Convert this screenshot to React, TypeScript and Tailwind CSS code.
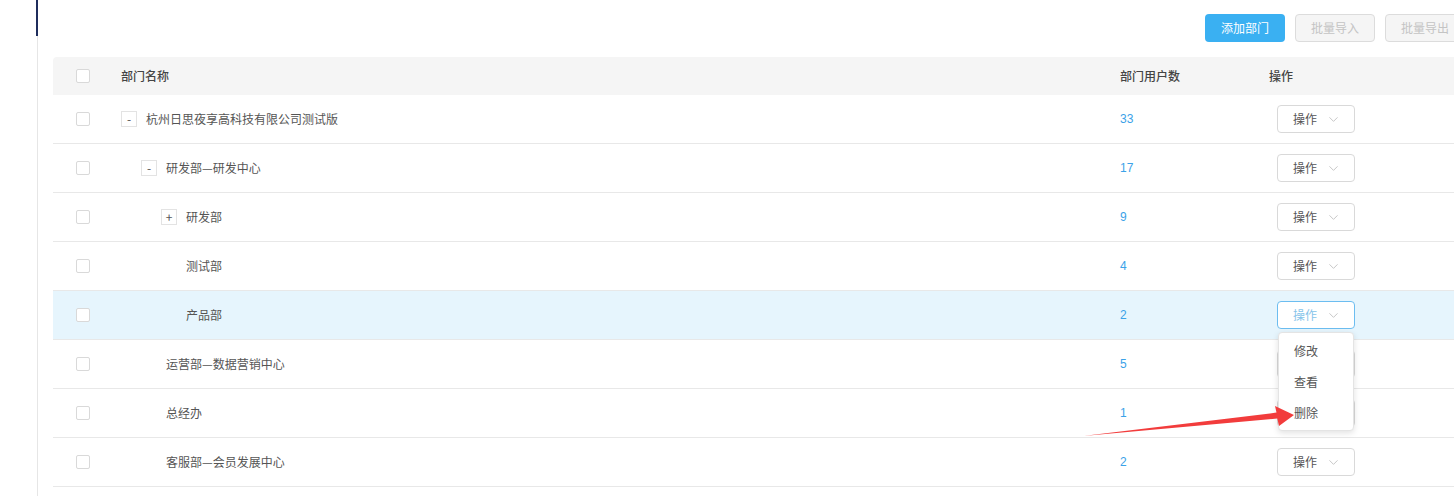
import { ChevronDown } from "lucide-react"

type Dept = {
    name: string
    level: number
    toggle?: "-" | "+"
    count: number
    active?: boolean
}

const depts: Dept[] = [
    { name: "杭州日思夜享高科技有限公司测试版", level: 0, toggle: "-", count: 33 },
    { name: "研发部—研发中心", level: 1, toggle: "-", count: 17 },
    { name: "研发部", level: 2, toggle: "+", count: 9 },
    { name: "测试部", level: 2, count: 4 },
    { name: "产品部", level: 2, count: 2, active: true },
    { name: "运营部—数据营销中心", level: 1, count: 5 },
    { name: "总经办", level: 1, count: 1 },
    { name: "客服部—会员发展中心", level: 1, count: 2 },
]

const indents = ["pl-0", "pl-[20px]", "pl-[40px]"]

const Checkbox = () => (
    <span className="block w-[14px] h-[14px] rounded-[2px] border border-[#d9d9d9] bg-white" />
)

const OpButton = ({ active }: { active?: boolean }) => (
    <button
        className={
            active
                ? "flex items-center w-[78px] h-[28px] pl-[15px] rounded-[4px] border border-[#6cbdf0] bg-white text-[12px] text-[#86c4ea]"
                : "flex items-center w-[78px] h-[28px] pl-[15px] rounded-[4px] border border-[#d9d9d9] bg-white text-[12px] text-[#555]"
        }
    >
        操作
        <ChevronDown className="ml-[9px] w-[15px] h-[15px] text-[#b4b4b4]" strokeWidth={1.2} />
    </button>
)

const App = () => {
    return (
        <div
            className="relative w-[1454px] h-[496px] overflow-hidden bg-white flex"
            style={{ fontFamily: '"Noto Sans CJK SC", "Liberation Sans", sans-serif' }}
        >
            <div className="w-[37px] flex-none" />
            <div className="relative flex-none w-[1428px] border-l border-[#e6e6e6] pl-[15px]">
                <div className="absolute left-[-2px] top-0 w-[2px] h-[36px] bg-[#1f2d5c]" />

                <div className="flex justify-end gap-[10px] pt-[14px] mb-[15px]">
                    <button className="w-[80px] h-[28px] rounded-[4px] bg-[#3ab0f2] text-white text-[12px]">添加部门</button>
                    <button className="w-[80px] h-[28px] rounded-[4px] border border-[#dcdcdc] bg-[#f5f5f5] text-[#c4c4c4] text-[12px]">批量导入</button>
                    <button className="w-[80px] h-[28px] rounded-[4px] border border-[#dcdcdc] bg-[#f5f5f5] text-[#c4c4c4] text-[12px]">批量导出</button>
                </div>

                <div className="text-[12px] text-[#555]">
                    <div className="flex items-center h-[38px] bg-[#f5f5f5] rounded-t-[4px] font-medium text-[#444]">
                        <div className="w-[68px] pl-[23px] flex-none"><Checkbox /></div>
                        <div className="flex-1">部门名称</div>
                        <div className="w-[149px] flex-none">部门用户数</div>
                        <div className="w-[196px] flex-none">操作</div>
                    </div>

                    {depts.map((d) => (
                        <div
                            key={d.name + d.count}
                            className={
                                d.active
                                    ? "flex items-center h-[49px] border-b border-[#e8e8e8] bg-[#e6f5fd]"
                                    : "flex items-center h-[49px] border-b border-[#e8e8e8]"
                            }
                        >
                            <div className="w-[68px] pl-[23px] flex-none"><Checkbox /></div>
                            <div className={`flex-1 flex items-center ${indents[d.level]}`}>
                                {d.toggle ? (
                                    <span className="flex items-center justify-center w-[16px] h-[16px] border border-[#e3e3e3] bg-white text-[12px] leading-none text-[#555]">
                                        {d.toggle}
                                    </span>
                                ) : (
                                    <span className="w-[16px]" />
                                )}
                                <span className="ml-[9px]">{d.name}</span>
                            </div>
                            <div className="w-[149px] flex-none text-[#3ba2e8]" style={{ fontFamily: '"Liberation Sans", sans-serif' }}>
                                {d.count}
                            </div>
                            <div className="w-[196px] flex-none pl-[8px]">
                                <div className="relative">
                                    <OpButton active={d.active} />
                                    {d.active && (
                                        <div className="absolute z-10 left-[1px] top-full mt-[3px] w-[76px] py-[2px] rounded-[4px] border border-[#e4e4e4] bg-white shadow-[0_2px_6px_rgba(0,0,0,0.12)]">
                                            {["修改", "查看", "删除"].map((t) => (
                                                <div key={t} className="h-[31px] flex items-center pl-[15px] text-[#555]">{t}</div>
                                            ))}
                                        </div>
                                    )}
                                </div>
                            </div>
                        </div>
                    ))}
                </div>
            </div>

            <svg className="absolute inset-0 z-20 pointer-events-none" width="1454" height="496">
                <polygon
                    points="1083,436 1276.5,412.6 1275,406 1294,415 1279,426 1277.3,418.6"
                    fill="#f23c3c"
                />
            </svg>
        </div>
    )
}

export default App
